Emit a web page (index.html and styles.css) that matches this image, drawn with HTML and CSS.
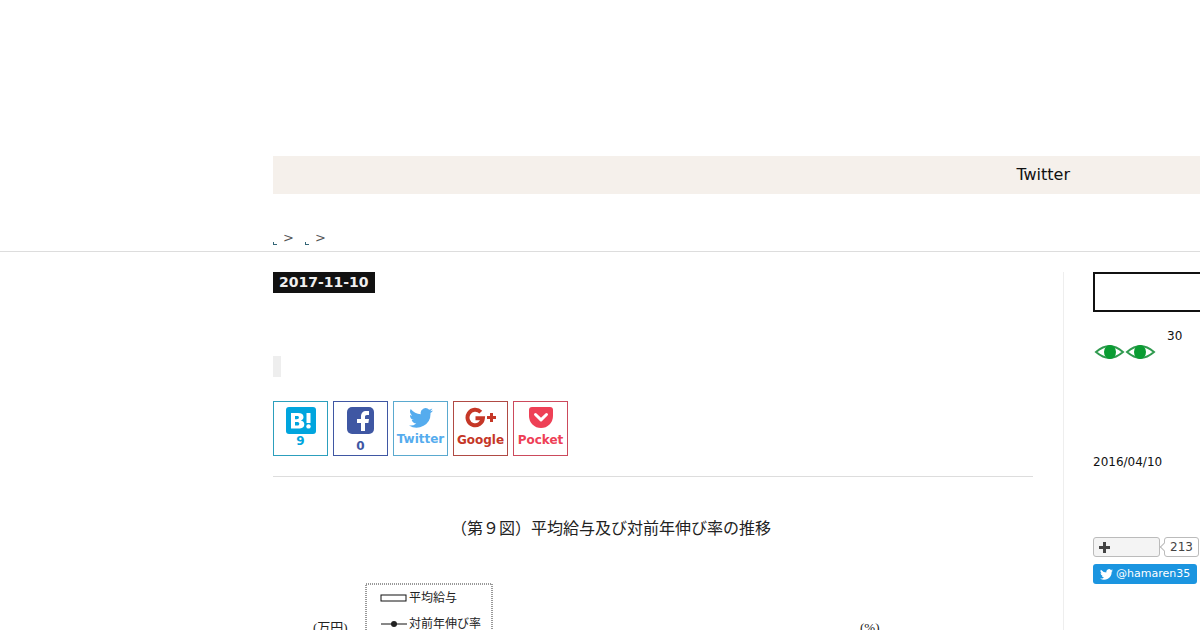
FILE: index.html
```html
<!DOCTYPE html>
<html lang="ja">
<head>
  <meta charset="UTF-8" />
  <meta name="viewport" content="width=device-width, initial-scale=1" />
  <title>2017-11-10</title>
  <link rel="stylesheet" href="styles.css">
</head>
<body>
  <svg class="defs" aria-hidden="true">
    <symbol id="bird" viewBox="0 0 24 20">
      <path d="M24 2.4a9.8 9.8 0 0 1-2.8.8A4.9 4.9 0 0 0 23.300.5a9.900 9.900 0 0 1-3.100 1.200A4.920 4.920 0 0 0 11.800 6.200 14 14 0 0 1 1.700 1a4.900 4.900 0 0 0 1.500 6.600A4.900 4.900 0 0 1 1 7a4.900 4.900 0 0 0 3.900 4.900 5 5 0 0 1-2.200.1 4.900 4.900 0 0 0 4.600 3.400A9.900 9.900 0 0 1 0 17.500 14 14 0 0 0 21.500 5A10 10 0 0 0 24 2.400z"/>
    </symbol>
  </svg>

  <header class="header"></header>
  <nav class="menu">
    <a href="#">Twitter</a>
  </nav>

  <div class="breadcrumb">
    <a href="#" aria-label="top"><svg viewBox="0 0 4 4"><path d="M0 1v3h4v-1H1V1z"/></svg></a>
    <span>&gt;</span>
    <a href="#" aria-label="category"><svg viewBox="0 0 4 4"><path d="M0 1v3h4v-1H1V1z"/></svg></a>
    <span>&gt;</span>
  </div>

  <div class="content">
    <main class="main">
      <time class="date" datetime="2017-11-10">2017-11-10</time>
      <h1 class="entry-title"></h1>
      <div class="categories"><a href="#" class="tag" aria-label="tag"></a></div>

      <div class="share">
        <a href="#" class="hatena">
          <svg width="30" height="27" viewBox="0 0 30 27">
            <rect width="30" height="27" rx="3" fill="currentColor"/>
            <path fill="#fff" fill-rule="evenodd" d="M5 6h7c3.800 0 5.500 1.300 5.500 4 0 1.900-1 3-2.800 3.400 2.300.4 3.600 1.700 3.600 3.800 0 3-2.300 4.300-5.800 4.300H5zM9 9v3.300h1.800c1.400 0 2.100-.5 2.100-1.700S12.200 9 10.800 9zM9 15v3.500h2c1.500 0 2.300-.5 2.300-1.800 0-1.200-.8-1.700-2.300-1.700z"/>
            <path fill="#fff" d="M20.500 6h4v10h-4z"/>
            <circle cx="22.500" cy="19.400" r="2.200" fill="#fff"/>
          </svg>
          <span>9</span>
        </a>
        <a href="#" class="facebook">
          <svg width="27" height="27" viewBox="0 0 27 27">
            <rect width="27" height="27" rx="5" fill="currentColor"/>
            <path fill="#fff" d="M14 24v-8h-4v-4h4V9.500C14 6 16 4 19.300 4H22v4h-2c-1.500 0-2 .8-2 2v2h4l-.6 4H18v8z"/>
          </svg>
          <span>0</span>
        </a>
        <a href="#" class="twitter">
          <svg width="24" height="22"><use href="#bird"/></svg>
          <span>Twitter</span>
        </a>
        <a href="#" class="google">
          <svg width="32" height="21" viewBox="0 0 32 21" fill="none" stroke="currentColor">
            <path stroke-width="4" d="M15.800 5.200A7.700 7.700 0 1 0 17.900 11.300H10.500"/>
            <path stroke-width="3" d="M26.500 6v9M22 10.500h9"/>
          </svg>
          <span>Google</span>
        </a>
        <a href="#" class="pocket">
          <svg width="24" height="21" viewBox="0 0 24 21">
            <path fill="currentColor" d="M3 0h18q3 0 3 3v6a12 12 0 0 1-24 0V3q0-3 3-3z"/>
            <path fill="none" stroke="#fff" stroke-width="3" stroke-linecap="round" stroke-linejoin="round" d="M6.500 7.500l5.500 5.300 5.500-5.300"/>
          </svg>
          <span>Pocket</span>
        </a>
      </div>

      <article class="entry">
        <svg class="chart" viewBox="0 0 760 300" role="img" aria-label="平均給与及び対前年伸び率の推移">
          <text class="chart-title" x="178" y="37">（第９図）平均給与及び対前年伸び率の推移</text>
          <rect class="legend-box" x="93" y="87" width="126" height="60"/>
          <rect class="legend-bar" x="108" y="98" width="25" height="6"/>
          <text x="136" y="105">平均給与</text>
          <path class="legend-line" d="M108 127h26"/>
          <circle cx="121" cy="127" r="3"/>
          <text x="136" y="131">対前年伸び率</text>
          <text class="unit" x="40" y="135">(万円)</text>
          <text class="unit" x="587" y="135">(%)</text>
        </svg>
      </article>
    </main>

    <aside class="sidebar">
      <input type="search" class="search" aria-label="search">
      <div class="profile">
        <svg width="64" height="32" viewBox="0 0 64 32">
          <g fill="none" stroke="#2f9a4e" stroke-width="2">
            <path d="M3 16Q10 10 16.500 10T30 16Q23 22 16.500 22T3 16z"/>
            <path d="M34 16Q41 10 47.500 10T61 16Q54 22 47.500 22T34 16z"/>
          </g>
          <g fill="#0a9c32">
            <ellipse cx="17" cy="16" rx="6" ry="7"/>
            <ellipse cx="47" cy="16" rx="6" ry="7"/>
          </g>
        </svg>
        <span>30</span>
      </div>
      <p class="since">2016/04/10</p>
      <div class="reader">
        <button type="button" aria-label="subscribe">
          <svg width="11" height="11" viewBox="0 0 11 11"><path stroke="#444" stroke-width="3" d="M5.500 0v11M0 5.500h11"/></svg>
        </button>
        <a href="#" class="count">213</a>
      </div>
      <a href="#" class="follow">
        <svg width="13" height="11"><use href="#bird"/></svg>
        <span>@hamaren35</span>
      </a>
    </aside>
  </div>
</body>
</html>
```
FILE: styles.css
```css
* {
  box-sizing: border-box;
}
body {
  margin: 0;
  overflow-x: hidden;
  background: #fff;
  color: #111;
  font-family: "DejaVu Sans", "Noto Sans CJK JP", sans-serif;
  font-size: 12px;
}
a {
  color: inherit;
  text-decoration: none;
}
svg {
  display: block;
}
.defs {
  position: absolute;
  width: 0;
  height: 0;
}
.header {
  height: 156px;
}
.menu {
  margin-left: 273px;
  padding-right: 130px;
  background: #f5f0eb;
  font-size: 16px;
  line-height: 38px;
  text-align: right;
}
.breadcrumb {
  display: flex;
  align-items: flex-end;
  gap: 6px;
  height: 58px;
  padding: 0 0 6px 273px;
  border-bottom: 1px solid #ddd;
  color: #555;
  font-size: 13px;
  line-height: 14px;
}
.breadcrumb a {
  color: #367;
}
.breadcrumb svg {
  width: 4px;
  height: 4px;
  fill: currentColor;
}
.breadcrumb span {
  padding-right: 5px;
}

.content {
  display: flex;
  margin: 20px 0 0 273px;
}
.main {
  flex: none;
  width: 791px;
  padding-right: 30px;
  border-right: 1px solid #eee;
}
.date {
  display: inline-block;
  padding: 0 6px;
  background: #111;
  color: #eee;
  font-size: 14px;
  font-weight: bold;
  line-height: 21px;
}
.entry-title {
  height: 42px;
  margin: 21px 0 0;
}
.tag {
  display: block;
  width: 8px;
  height: 21px;
  background: #eee;
}

.share {
  display: flex;
  gap: 5px;
  margin-top: 24px;
  padding-bottom: 20px;
  border-bottom: 1px solid #ddd;
}
.share a {
  display: flex;
  flex-direction: column;
  align-items: center;
  width: 55px;
  height: 55px;
  padding-top: 5px;
  border: 1px solid currentColor;
  font-weight: bold;
  line-height: 14px;
}
.share svg {
  flex: none;
}
.share .hatena {
  color: #00a5de;
  border-color: #2c9fbd;
}
.share .facebook {
  color: #3f57a3;
}
.facebook span {
  padding-top: 5px;
}
.share .twitter {
  color: #55acee;
  border-color: #5aa9cf;
}
.twitter span {
  padding-top: 3px;
}
.share .google {
  color: #c53727;
  border-color: #b04a44;
}
.share .pocket {
  color: #ee4056;
  border-color: #cc4a5c;
}
.google span,
.pocket span {
  padding-top: 5px;
}

.entry {
  margin-top: 20px;
}
.chart {
  width: 100%;
  fill: #222;
  font-family: "Liberation Serif", "Noto Sans CJK JP", serif;
  font-size: 12px;
}
.chart-title {
  font-size: 16px;
}
.unit {
  font-size: 13px;
}
.legend-box {
  fill: none;
  stroke: #333;
  stroke-dasharray: 1 1;
}
.legend-bar {
  fill: #fff;
  stroke: #111;
}
.legend-line {
  stroke: #111;
}

.sidebar {
  flex: none;
  width: 300px;
  margin-left: 29px;
}
.search {
  display: block;
  width: 100%;
  height: 40px;
  border: 2px solid #111;
  background: #fff;
}
.profile {
  display: flex;
  align-items: flex-start;
  gap: 10px;
  margin-top: 16px;
  line-height: 16px;
}
.profile svg {
  margin-top: 8px;
}
.since {
  margin: 86px 0 0;
  line-height: 16px;
}
.reader {
  display: flex;
  gap: 4px;
  margin-top: 67px;
}
.reader button {
  width: 67px;
  height: 20px;
  padding: 0 5px;
  border: 1px solid #bbb;
  border-radius: 3px;
  background: #f4f4f4;
}
.count {
  position: relative;
  padding: 0 5px;
  border: 1px solid #bbb;
  border-radius: 3px;
  color: #444;
  line-height: 18px;
}
.count::before {
  content: "";
  position: absolute;
  top: 6px;
  left: -4px;
  width: 5px;
  height: 5px;
  border: 1px solid #bbb;
  border-width: 0 0 1px 1px;
  background: #fff;
  transform: rotate(45deg);
}
.follow {
  display: inline-flex;
  align-items: center;
  gap: 3px;
  margin-top: 7px;
  padding: 0 7px;
  border-radius: 3px;
  background: #1b95e0;
  color: #fff;
  font-size: 11px;
  line-height: 20px;
}
.follow svg,
.twitter svg {
  fill: currentColor;
}
```
